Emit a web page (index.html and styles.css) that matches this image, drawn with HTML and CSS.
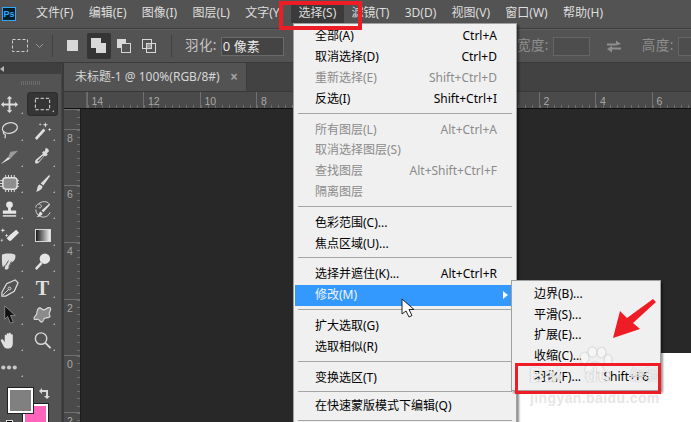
FILE: index.html
```html
<!DOCTYPE html>
<html lang="zh">
<head>
<meta charset="utf-8">
<title>Photoshop 选择菜单</title>
<link rel="stylesheet" href="styles.css">
</head>
<body>
<div class="app">
  <header class="menubar">
    <div class="ps-logo">Ps</div>
    <nav class="menu-titles">
      <span>文件(F)</span><span>编辑(E)</span><span>图像(I)</span><span>图层(L)</span><span>文字(Y)</span>
      <span class="active">选择(S)</span><span>滤镜(T)</span><span>3D(D)</span><span>视图(V)</span><span>窗口(W)</span><span>帮助(H)</span>
    </nav>
  </header>

  <section class="options">
    <svg class="opt-marquee" width="17" height="14" viewBox="0 0 17 14"><rect x=".5" y=".5" width="15" height="12" fill="none" stroke="#d0d0d0" stroke-dasharray="3 2"/></svg>
    <svg class="opt-chev" width="9" height="6" viewBox="0 0 9 6"><path d="M1 1l3.5 3.5L8 1" fill="none" stroke="#9a9a9a"/></svg>
    <i class="opt-sep"></i>
    <span class="mode"><svg width="12" height="12" viewBox="0 0 12 12"><rect width="11" height="11" fill="#d8d8d8"/></svg></span>
    <span class="mode on"><svg width="16" height="16" viewBox="0 0 16 16"><rect x="0" y="0" width="10" height="10" fill="#d8d8d8"/><rect x="5" y="5" width="10" height="10" fill="#d8d8d8"/></svg></span>
    <span class="mode"><svg width="15" height="15" viewBox="0 0 15 15"><rect x="0" y="0" width="9" height="9" fill="#d8d8d8"/><rect x="4.5" y="4.5" width="9" height="9" fill="#535353" stroke="#d8d8d8"/></svg></span>
    <span class="mode"><svg width="15" height="15" viewBox="0 0 15 15"><rect x=".5" y=".5" width="9" height="9" fill="none" stroke="#d8d8d8"/><rect x="4.5" y="4.5" width="9" height="9" fill="none" stroke="#d8d8d8"/><rect x="5" y="5" width="4" height="4" fill="#9a9a9a"/></svg></span>
    <i class="opt-sep wide"></i>
    <label class="opt-label">羽化:</label>
    <span class="opt-input feather">0 像素</span>
    <span class="opt-right">
      <label class="opt-label dim">宽度:</label>
      <span class="opt-input small"></span>
      <svg class="opt-swap" width="16" height="13" viewBox="0 0 16 13"><path d="M1 3.500h9V.5l5 3.500-5 1.500H1zM15 7.500H6V5.800L1 9l5 3.500V9.500h9z" fill="#8e8e8e"/></svg>
      <label class="opt-label dim">高度:</label>
      <span class="opt-input small"></span>
    </span>
  </section>

  <main class="work">
    <aside class="toolbar">
      <div class="tool-head"><svg width="5" height="6" viewBox="0 0 5 6"><path d="M4 0v6L0 3z" fill="#b8b8b8"/></svg></div>
      <div class="tool-grip"></div>
      <div class="tools">
        <span class="tool"><svg viewBox="0 0 20 20"><path d="M10 1l3 3h-2v5h5V7l3 3-3 3v-2h-5v5h2l-3 3-3-3h2v-5H4v2l-3-3 3-3v2h5V4H7z" fill="#dcdcdc"/></svg></span>
        <span class="tool sel"><svg viewBox="0 0 20 20"><rect x="2.500" y="3.500" width="15" height="12" fill="none" stroke="#e6e6e6" stroke-dasharray="3.500 2"/></svg></span>
        <span class="tool"><svg viewBox="0 0 20 20"><ellipse cx="10.500" cy="7.500" rx="8" ry="5.500" fill="none" stroke="#d8d8d8" stroke-width="1.300" transform="rotate(-12 10 8)"/><path d="M4 11c-1 2 0 3 1 3s1 2 0 4" fill="none" stroke="#d8d8d8" stroke-width="1.300"/></svg></span>
        <span class="tool"><svg viewBox="0 0 20 20"><path d="M2 18l9-10 2 2-9 10z" fill="#e0e0e0"/><path d="M13 1l.7 2.300L16 4l-2.300.7L13 7l-.7-2.300L10 4l2.300-.7zM17.500 7l.5 1.500 1.500.5-1.500.5-.5 1.500-.5-1.500L15.500 9l1.500-.5zM7.500 2l.4 1.100L9 3.500l-1.100.4L7.500 5l-.4-1.100L6 3.500l1.100-.4z" fill="#e0e0e0"/></svg></span>
        <span class="tool"><svg viewBox="0 0 20 20"><path d="M1 18l10-6 8-8-8 1-3 7z" fill="#9a9a9a"/><path d="M1 18l10-6-3-1z" fill="#e0e0e0"/></svg></span>
        <span class="tool"><svg viewBox="0 0 20 20"><path d="M13 1.500c2-1 4.500 1.500 3.500 3.500l-2 1.500 1 1.500-2 2-1-1-6.500 7.500c-1 1-3 1-3.500.5s-.5-2.500.5-3.500l7.500-6.500-1-1 2-2 1 1z" fill="#dcdcdc"/><path d="M10.500 9L4.700 14.500l1 1 5.500-5.800z" fill="#535353"/></svg></span>
        <span class="tool"><svg viewBox="0 0 20 20"><rect x="3" y="4" width="15" height="12" rx="3" fill="#8e8e8e" stroke="#e2e2e2" stroke-width="1.500"/><path d="M6 1v3M9 1v3M12 1v3M15 1v3M6 16v3M9 16v3M12 16v3M15 16v3M0 7h3M0 10h3M0 13h3M18 7h2M18 10h2M18 13h2" stroke="#e2e2e2"/></svg></span>
        <span class="tool"><svg viewBox="0 0 20 20"><path d="M17 1l1 1-7 10-3-2z" fill="#dcdcdc"/><path d="M7 11l3 2c0 3-3 5-7 6 2-2 1-7 4-8z" fill="#dcdcdc"/></svg></span>
        <span class="tool"><svg viewBox="0 0 20 20"><circle cx="10" cy="5" r="3.500" fill="#e6e6e6"/><path d="M8.500 8h3v3H17v3.500H3V11h5.500z" fill="#e6e6e6"/><rect x="3" y="16" width="14" height="1.500" fill="#e6e6e6"/></svg></span>
        <span class="tool"><svg viewBox="0 0 20 20"><path d="M6 4c3-3 9-3 11 0M3 8c0-3 3-5 5-3s0 4-2 3" fill="none" stroke="#d8d8d8"/><path d="M3 10c0 5 4 8 8 8 3 0 6-2 7-5" fill="none" stroke="#d8d8d8"/><path d="M17 4l1 1-7 8-2-2z" fill="#e0e0e0"/><path d="M8 12l2 2c0 2-3 4-6 4 2-2 2-5 4-6z" fill="#e0e0e0"/></svg></span>
        <span class="tool"><svg viewBox="0 0 20 20"><path d="M11 9l6-5 3 3-8 8c-1 1-2 1-3 0l-2-2z" fill="#e6e6e6"/><path d="M3 2l.6 2 2 .6-2 .6L3 7l-.6-1.800-2-.6 2-.6zM7 8l.5 1.500L9 10l-1.500.5L7 12l-.5-1.500L5 10l1.500-.5z" fill="#e6e6e6"/><path d="M2 13l.4 1.400 1.400.4-1.400.4L2 17l-.4-1.400L.2 15.200l1.400-.4z" fill="#e6e6e6"/></svg></span>
        <span class="tool"><i class="gradient"></i></span>
        <span class="tool"><svg viewBox="0 0 20 20"><path d="M2 3c3-2 11-2 14 0 1 3-1 7-4 8l-3 6c-1 2-4 2-4 0l1-4-3 3c-1-2-1-8-1-13z" fill="#dcdcdc"/><path d="M9 9l-3 5M12 10l-3 6" stroke="#535353"/></svg></span>
        <span class="tool"><svg viewBox="0 0 20 20"><circle cx="12.500" cy="7" r="5.500" fill="#e6e6e6"/><path d="M9 11.500L3 18" stroke="#e6e6e6" stroke-width="2.500"/></svg></span>
        <span class="tool"><svg viewBox="0 0 20 20"><path d="M16 1l3 3-4 9-9 5-4 0 0-4 5-9z" fill="none" stroke="#dcdcdc" stroke-width="1.300"/><path d="M3 17l6-6" stroke="#dcdcdc"/><circle cx="10" cy="10" r="1.500" fill="none" stroke="#dcdcdc"/></svg></span>
        <span class="tool"><span class="t-glyph">T</span></span>
        <span class="tool"><svg viewBox="0 0 20 20"><path d="M5 1l11 10h-5l3 7-3 1-3-7-3 3z" fill="#111" stroke="#bbb" stroke-width=".6"/></svg></span>
        <span class="tool"><svg viewBox="0 0 20 20"><path d="M7 3c2 0 3 3 5 2s4-3 6-2-1 5-1 6 2 3 0 4-4 0-5 1-1 4-3 4-2-3-4-3-4 1-4-1 3-3 3-5 1-6 3-6z" fill="#8b8b8b" stroke="#dcdcdc" stroke-width="1.200"/></svg></span>
        <span class="tool"><svg viewBox="0 0 20 20"><path d="M5 5c0-1.500 2-1.500 2 0v4V3.500c0-1.500 2.200-1.500 2.200 0V9V3c0-1.500 2.200-1.500 2.200 0v6V4.500c0-1.500 2.100-1.500 2.100 0v8c0 4-2 6-5 6-2.500 0-4-1-5-3L1 10.500c-.7-1.500 1-2.500 2-1.500l2 2.500z" fill="#e0e0e0"/></svg></span>
        <span class="tool"><svg viewBox="0 0 20 20"><circle cx="8.500" cy="8" r="6" fill="none" stroke="#d8d8d8" stroke-width="1.500"/><path d="M13 12.500l5.500 5.500" stroke="#d8d8d8" stroke-width="2"/></svg></span>
        <span class="tool"><svg viewBox="0 0 20 20"><circle cx="3.500" cy="10" r="2.200" fill="#c8c8c8"/><circle cx="9.500" cy="10" r="2.200" fill="#c8c8c8"/><circle cx="15.500" cy="10" r="2.200" fill="#c8c8c8"/></svg></span>
      </div>
      <div class="swatches">
        <span class="swatch bg"></span>
        <span class="swatch fg"></span>
        <svg class="swap" width="11" height="12" viewBox="0 0 11 12"><path d="M0 3l3-3v2h6v6h2l-3 3-3-3h2V4H3v2z" fill="#d8d8d8"/></svg>
        <span class="default"></span>
      </div>
    </aside>
    <div class="divider"></div>
    <div class="doc">
      <div class="tabs"><div class="tab"><span>未标题-1 @ 100%(RGB/8#)</span><b>×</b></div></div>
      <div class="ruler-h">
        <span class="corner"></span>
        <span class="rh">14</span><span class="rh">12</span><span class="rh">10</span><span class="rh">8</span><span class="rh">6</span><span class="rh">4</span><span class="rh">2</span><span class="rh">0</span><span class="rh">2</span><span class="rh">4</span><span class="rh">6</span>
      </div>
      <div class="doc-body">
        <div class="ruler-v">
          <span class="rv lead"></span><span class="rv">8</span><span class="rv">6</span><span class="rv">4</span><span class="rv">2</span><span class="rv">0</span><span class="rv">2</span>
        </div>
        <div class="canvas"><div class="paper"></div></div>
      </div>
    </div>
  </main>

  <div class="dropdown">
    <div class="mi"><span>全部(A)</span><kbd>Ctrl+A</kbd></div>
    <div class="mi"><span>取消选择(D)</span><kbd>Ctrl+D</kbd></div>
    <div class="mi off"><span>重新选择(E)</span><kbd>Shift+Ctrl+D</kbd></div>
    <div class="mi"><span>反选(I)</span><kbd>Shift+Ctrl+I</kbd></div>
    <hr>
    <div class="mi off"><span>所有图层(L)</span><kbd>Alt+Ctrl+A</kbd></div>
    <div class="mi off"><span>取消选择图层(S)</span></div>
    <div class="mi off"><span>查找图层</span><kbd>Alt+Shift+Ctrl+F</kbd></div>
    <div class="mi off"><span>隔离图层</span></div>
    <hr>
    <div class="mi"><span>色彩范围(C)...</span></div>
    <div class="mi"><span>焦点区域(U)...</span></div>
    <hr>
    <div class="mi"><span>选择并遮住(K)...</span><kbd>Alt+Ctrl+R</kbd></div>
    <div class="mi hot"><span>修改(M)</span><i class="sub-arrow"></i></div>
    <hr>
    <div class="mi"><span>扩大选取(G)</span></div>
    <div class="mi"><span>选取相似(R)</span></div>
    <hr>
    <div class="mi"><span>变换选区(T)</span></div>
    <hr class="tight">
    <div class="mi"><span>在快速蒙版模式下编辑(Q)</span></div>
    <hr>
  </div>

  <div class="submenu">
    <div class="mi"><span>边界(B)...</span></div>
    <div class="mi"><span>平滑(S)...</span></div>
    <div class="mi"><span>扩展(E)...</span></div>
    <div class="mi"><span>收缩(C)...</span></div>
    <div class="mi"><span>羽化(F)...</span><kbd>Shift+F6</kbd></div>
  </div>

  <svg class="cursor" width="15" height="21" viewBox="0 0 15 21"><path d="M1 1v15l4-3 3 6 3-1.500-3-6h5z" fill="#fff" stroke="#222"/></svg>
  <svg class="red-arrow" width="46" height="44" viewBox="0 0 46 44"><path d="M41 1l3 3L21 25l7 6L1 40l7-27 7 7z" fill="#ee1c25"/></svg>
  <div class="watermark">
    <svg class="paw" width="34" height="27" viewBox="0 0 52 40"><g fill="#fff" fill-opacity=".85"><ellipse cx="10" cy="16" rx="6" ry="8"/><ellipse cx="22" cy="7" rx="6" ry="7"/><ellipse cx="36" cy="8" rx="6" ry="7"/><ellipse cx="46" cy="19" rx="5" ry="7"/><path d="M12 38c-4-9 8-15 14-15s15 8 13 15c-6 2-8-1-13-1s-9 3-14 1z"/></g></svg>
    <span class="wm-bai">Bai</span><span class="wm-du">du</span><span class="wm-cn">经验</span>
    <span class="wm-url">jingyan.baidu.com</span>
  </div>
  <div class="redbox top"></div>
  <div class="redbox low"></div>
</div>
</body>
</html>
```
FILE: styles.css
```css
* { box-sizing: border-box; }
html, body { margin: 0; padding: 0; }
body { width: 691px; height: 422px; overflow: hidden; background: #535353; }
.app {
  position: relative; width: 691px; height: 422px; overflow: hidden;
  display: flex; flex-direction: column;
  font: 12px/1 "Noto Sans", "Noto Sans CJK SC", sans-serif; color: #dedede;
}

/* menu bar */
.menubar { height: 29px; flex: none; display: flex; align-items: center; background: #535353; border-bottom: 1px solid #3d3d3d; padding-left: 2px; }
.ps-logo { width: 14px; height: 14px; border: 1px solid #31a8ff; background: #001d26; color: #31a8ff; font: bold 9px/12px "Liberation Sans", sans-serif; text-align: center; }
.menu-titles { display: flex; margin-left: 12.350px; height: 20px; margin-top: -3px; }
.menu-titles span { padding: 0 7.650px; line-height: 20px; white-space: nowrap; }
.menu-titles .active { background: #3b3b3b; }

/* options bar */
.options { height: 34px; flex: none; display: flex; align-items: center; padding-left: 12px; background: #535353; border-top: 1px solid #5e5e5e; border-bottom: 1px solid #3a3a3a; }
.opt-marquee { flex: none; }
.opt-chev { margin-left: 6px; flex: none; }
.opt-sep { width: 1px; height: 22px; background: #414141; flex: none; margin: 0 8px; }
.opt-sep.wide { margin: 0 13px 0 8px; }
.mode { width: 24px; height: 26px; margin-right: 1.500px; display: flex; align-items: center; justify-content: center; border-radius: 2px; flex: none; }
.mode.on { background: #353535; }
.opt-label { color: #c4c4c4; font-size: 13.500px; letter-spacing: .4px; flex: none; }
.opt-label.dim { color: #8e8e8e; }
.opt-input { height: 19px; border: 1px solid #6a6a6a; background: #4a4a4a; flex: none; }
.opt-input.feather { width: 63px; margin-left: 4px; padding-left: 1px; line-height: 17px; color: #e8e8e8; font-size: 13px; background: #444; }
.opt-input.small { width: 37px; border-color: #656565; background: #4d4d4d; }
.opt-right { margin-left: auto; display: flex; align-items: center; width: 174px; flex: none; overflow: hidden; height: 24px; }
.opt-right .opt-input { margin-left: 4px; }
.opt-swap { margin: 0 20px 0 16px; flex: none; }

/* work area */
.work { flex: 1; min-height: 0; display: flex; background: #424242; }
.toolbar { width: 61px; flex: none; background: #535353; position: relative; }
.tool-head { height: 11px; background: #3f3f3f; display: flex; align-items: center; }
.tool-grip { height: 17px; margin: 0 auto; width: 20px; background: repeating-linear-gradient(90deg, #6b6b6b 0 1px, transparent 1px 2px) center / 20px 4px no-repeat; }
.tools { display: grid; grid-template-columns: 27px 31px; grid-auto-rows: 26.300px; }
.tool { position: relative; display: flex; align-items: center; padding-left: 0; }
.tool:nth-child(even) { justify-content: center; }
.tool svg { width: 19px; height: 19px; flex: none; }
.tool::after { content: ""; position: absolute; right: 4px; bottom: 3px; border: 1.500px solid transparent; border-right-color: #b4b4b4; border-bottom-color: #b4b4b4; }
.tool:nth-child(even)::after { right: 3px; }
.tool.sel { background: #353535; border-radius: 3px; border: 1px solid #2c2c2c; margin: 1px 0 1px 0; }
.gradient { display: block; width: 16px; height: 13px; background: linear-gradient(90deg, #1a1a1a, #f0f0f0); border: 1px solid #d8d8d8; }
.t-glyph { font: bold 20px/1 "Liberation Serif", serif; color: #e0e0e0; }
.swatches { position: relative; height: 40px; margin-top: 8px; }
.swatch { position: absolute; width: 25px; height: 25px; border: 2px solid #fff; outline: 1px solid #222; }
.swatch.fg { left: 8px; top: 0; background: #808080; }
.swatch.bg { left: 23px; top: 16px; background: #ff66bb; }
.swap { position: absolute; left: 39px; top: 0; }
.default { position: absolute; left: 6px; top: 32px; width: 7px; height: 7px; background: #000; border: 1px solid #ddd; }
.divider { width: 3px; flex: none; background: #3a3a3a; border-left: 1px solid #444; }
.doc { flex: 1; min-width: 0; display: flex; flex-direction: column; }
.tabs { height: 29px; flex: none; background: #424242; display: flex; border-bottom: 1px solid #383838; }
.tab { width: 183px; background: #535353; display: flex; align-items: center; padding-left: 11px; color: #d6d6d6; border-right: 1px solid #3c3c3c; }
.tab b { margin-left: 11px; color: #a8a8a8; font: bold 12px/1 "Liberation Sans", sans-serif; }

/* rulers */
.ruler-h { height: 17px; flex: none; display: flex; background: #4a4a4a; overflow: hidden; border-bottom: 1px solid #101010; }
.corner { width: 22.500px; flex: none; border-right: 1px solid #666; }
.rh { width: 56.500px; flex: none; padding: 4px 0 0 4px; font: 10.500px/1 "Liberation Sans", sans-serif; color: #a8a8a8; border-left: 1px solid #707070;
  background: repeating-linear-gradient(90deg, #6e6e6e 0 1px, transparent 1px 7.060px) 0 100% / 100% 3px no-repeat; }
.doc-body { flex: 1; min-height: 0; display: flex; }
.ruler-v { width: 17px; flex: none; background: #4a4a4a; overflow: hidden; border-right: 1px solid #1c1c1c; }
.rv { display: block; height: 56.700px; padding: 3px 0 0 3px; font: 10.500px/1 "Liberation Sans", sans-serif; color: #a8a8a8; border-top: 1px solid #707070;
  background: repeating-linear-gradient(180deg, #6e6e6e 0 1px, transparent 1px 7.080px) 100% 0 / 3px 100% no-repeat; }
.rv.lead { height: 19.500px; }
.canvas { flex: 1; min-width: 0; background: #282828; position: relative; }
.paper { position: absolute; right: 0; bottom: 0; width: 174px; height: 69px; background: #fff; }

/* dropdowns */
.dropdown, .submenu { position: absolute; background: #f0f0f0; color: #000; border: 1px solid #a0a0a0; }
.dropdown { left: 293px; top: 23px; width: 224px; height: 410px; padding: 2px 1px 0; box-shadow: 2px 2px 2px rgba(0,0,0,.45); }
.submenu { left: 511px; top: 280px; width: 150px; height: 111px; padding: 2.500px 1px 0; box-shadow: 2px 2px 2px rgba(0,0,0,.4); }
.mi { height: 20.800px; flex: none; display: flex; justify-content: space-between; align-items: center; padding: 0 18px 0 20px; white-space: nowrap; position: relative; }
.submenu .mi { padding: 0 10px 0 21px; }
.mi kbd { font: inherit; }
.mi.off { color: #8b8b8b; }
.mi.hot { background: #3399ff; color: #f4f4f4; }
.sub-arrow { position: absolute; right: 7px; top: 6px; border: 4px solid transparent; border-left: 5px solid #fff; border-right: 0; }
.dropdown hr { margin: 3.500px 3px 5.500px; height: 1px; border: 0; background: #a6a6a6; }
.dropdown hr.tight { margin-bottom: 3.400px; }

/* overlays */
.cursor { position: absolute; left: 401px; top: 298px; }
.red-arrow { position: absolute; left: 612px; top: 298px; }
.watermark { position: absolute; left: 525px; top: 345px; width: 140px; height: 62px; color: #fff; }
.paw { position: absolute; left: 53px; top: 2px; filter: drop-shadow(0 0 1px rgba(0,0,0,.3)); }
.wm-bai, .wm-du, .wm-cn, .wm-url { position: absolute; white-space: nowrap; }
.wm-bai, .wm-du { font: bold 21px/1 "Liberation Sans", sans-serif; color: rgba(255,255,255,.85); top: 19px; text-shadow: 0 0 1px rgba(0,0,0,.35); }
.wm-bai { left: 4px; }
.wm-du { left: 60px; }
.wm-cn { left: 105px; top: 21px; font: bold 15px/1 "Noto Sans CJK SC", sans-serif; color: rgba(255,255,255,.8); text-shadow: 0 0 1px rgba(0,0,0,.3); }
.wm-url { left: 5px; top: 46px; font: bold 14px/1 "Liberation Sans", sans-serif; letter-spacing: .4px; color: #e6e6e6; }
.redbox { position: absolute; border: 4px solid #ee1c25; }
.redbox.top { left: 279px; top: 1px; width: 83px; height: 29px; }
.redbox.low { left: 515px; top: 363px; width: 146px; height: 31px; border-width: 3px; }
```
